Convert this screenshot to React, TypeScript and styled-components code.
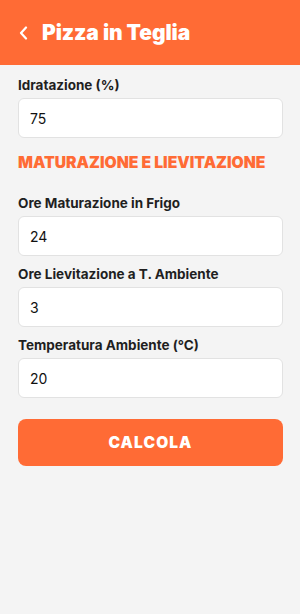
import React from "react";
import styled, { createGlobalStyle } from "styled-components";

const Global = createGlobalStyle`
  html, body { margin: 0; padding: 0; background: #f4f4f4; }
  body { font-family: Inter, "Noto Sans", "Liberation Sans", sans-serif; }
  * { box-sizing: border-box; }
`;

const ORANGE = "#ff6b35";

const Page = styled.div`
  width: 300px;
  min-height: 614px;
  background: #f4f4f4;
  display: flex;
  flex-direction: column;
`;

const Header = styled.header`
  height: 65px;
  background: ${ORANGE};
  display: flex;
  align-items: center;
  padding: 0 18px 0 19px;
  gap: 13px;
`;

const BackButton = styled.button`
  border: 0;
  background: transparent;
  padding: 0;
  display: flex;
  align-items: center;
  color: #fff;
  cursor: pointer;
`;

const Title = styled.h1`
  margin: 0;
  color: #fff;
  font-size: 21px;
  font-weight: 900;
  letter-spacing: -0.1px;
`;

const Content = styled.main`
  display: flex;
  flex-direction: column;
  padding: 12px 17px 0 18px;
`;

const Field = styled.div<{ $gapTop?: number }>`
  display: flex;
  flex-direction: column;
  gap: 5px;
  margin-top: ${(p) => p.$gapTop ?? 10}px;
`;

const Label = styled.label`
  font-size: 13.5px;
  font-weight: 700;
  color: #1f1f1f;
  line-height: 16px;
`;

const Input = styled.input`
  height: 40px;
  width: 100%;
  border: 1px solid #e2e2e2;
  border-radius: 6px;
  background: #fff;
  padding: 0 11px;
  font-family: inherit;
  font-size: 14px;
  color: #111;
  outline: none;
`;

const Section = styled.h2`
  margin: 15px 0 0;
  color: ${ORANGE};
  font-size: 15.7px;
  font-weight: 900;
  line-height: 20px;
  letter-spacing: 0px;
`;

const SubmitButton = styled.button`
  margin-top: 21px;
  height: 47px;
  border: 0;
  border-radius: 8px;
  background: ${ORANGE};
  color: #fff;
  font-family: inherit;
  font-size: 15.5px;
  font-weight: 900;
  letter-spacing: 1.1px;
  cursor: pointer;
`;

const fields1 = [{ label: "Idratazione (%)", value: "75" }];
const fields2 = [
  { label: "Ore Maturazione in Frigo", value: "24" },
  { label: "Ore Lievitazione a T. Ambiente", value: "3" },
  { label: "Temperatura Ambiente (°C)", value: "20" },
];

export default function App() {
  return (
    <Page>
      <Global />
      <Header>
        <BackButton aria-label="Indietro">
          <svg width="10" height="14" viewBox="0 0 10 14" fill="none">
            <path d="M7 1.5 L2 7 L7 12.5" stroke="#fff" strokeWidth="2.2" strokeLinecap="round" strokeLinejoin="round" />
          </svg>
        </BackButton>
        <Title>Pizza in Teglia</Title>
      </Header>
      <Content>
        {fields1.map((f) => (
          <Field key={f.label} $gapTop={0}>
            <Label>{f.label}</Label>
            <Input defaultValue={f.value} />
          </Field>
        ))}
        <Section>MATURAZIONE E LIEVITAZIONE</Section>
        {fields2.map((f, i) => (
          <Field key={f.label} $gapTop={i === 0 ? 22 : 10}>
            <Label>{f.label}</Label>
            <Input defaultValue={f.value} />
          </Field>
        ))}
        <SubmitButton>CALCOLA</SubmitButton>
      </Content>
    </Page>
  );
}
